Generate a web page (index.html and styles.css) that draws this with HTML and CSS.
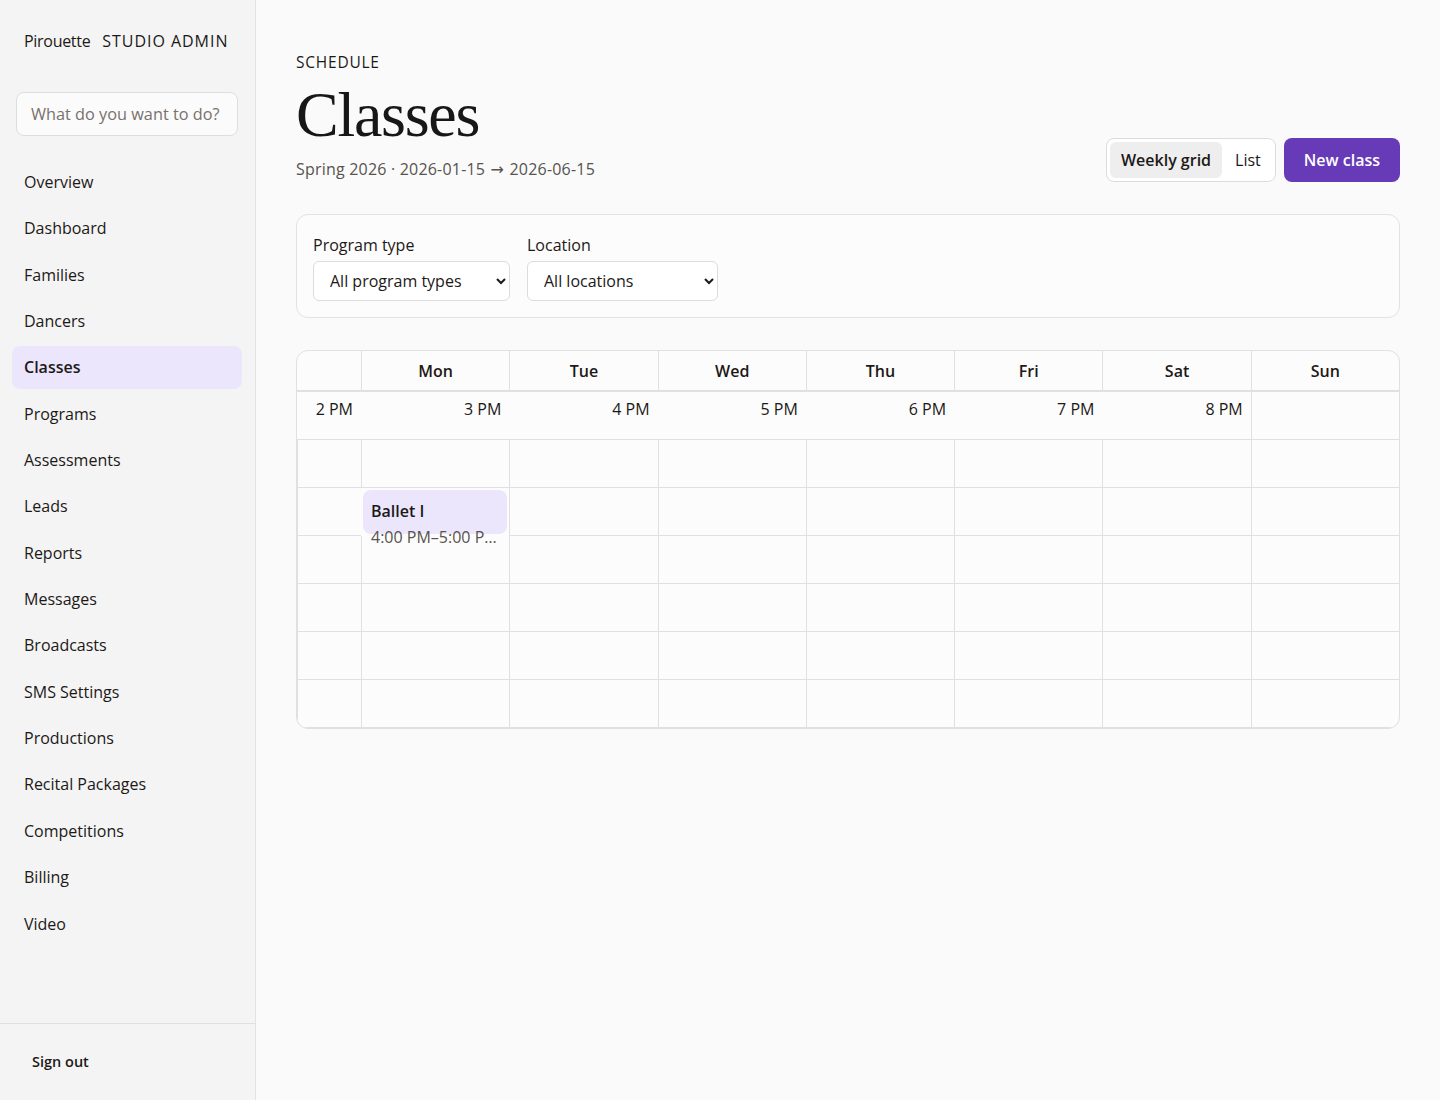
FILE: index.html
```html
<!DOCTYPE html>
<html lang="en">

<head>
  <meta charset="UTF-8" />
  <meta name="viewport" content="width=device-width, initial-scale=1.0" />
  <title>Classes · Pirouette</title>
  <link rel="stylesheet" href="styles.css">
</head>

<body>
  <div class="app">
    <aside class="sidebar">
      <div class="brand">
        <span class="brand-name">Pirouette</span>
        <span class="brand-tag">STUDIO ADMIN</span>
      </div>

      <input class="search" type="text" placeholder="What do you want to do?">

      <nav class="nav">
        <a class="nav-item" href="#">Overview</a>
        <a class="nav-item" href="#">Dashboard</a>
        <a class="nav-item" href="#">Families</a>
        <a class="nav-item" href="#">Dancers</a>
        <a class="nav-item active" href="#">Classes</a>
        <a class="nav-item" href="#">Programs</a>
        <a class="nav-item" href="#">Assessments</a>
        <a class="nav-item" href="#">Leads</a>
        <a class="nav-item" href="#">Reports</a>
        <a class="nav-item" href="#">Messages</a>
        <a class="nav-item" href="#">Broadcasts</a>
        <a class="nav-item" href="#">SMS Settings</a>
        <a class="nav-item" href="#">Productions</a>
        <a class="nav-item" href="#">Recital Packages</a>
        <a class="nav-item" href="#">Competitions</a>
        <a class="nav-item" href="#">Billing</a>
        <a class="nav-item" href="#">Video</a>
      </nav>

      <div class="sidebar-footer">
        <a class="signout" href="#">Sign out</a>
      </div>
    </aside>

    <main class="main">
      <div class="page-head">
        <div>
          <div class="eyebrow">SCHEDULE</div>
          <h1 class="page-title">Classes</h1>
          <div class="page-sub">Spring 2026 · 2026-01-15 <span class="arrow">→</span> 2026-06-15</div>
        </div>
        <div class="head-actions">
          <div class="segmented">
            <button class="seg-btn on">Weekly grid</button>
            <button class="seg-btn">List</button>
          </div>
          <button class="btn-primary">New class</button>
        </div>
      </div>

      <div class="filters">
        <label class="field">
          <span class="field-label">Program type</span>
          <select class="select select-program">
            <option>All program types</option>
          </select>
        </label>
        <label class="field">
          <span class="field-label">Location</span>
          <select class="select select-location">
            <option>All locations</option>
          </select>
        </label>
      </div>

      <div class="week">
        <div class="week-head">
          <div class="wh-cell corner"></div>
          <div class="wh-cell">Mon</div>
          <div class="wh-cell">Tue</div>
          <div class="wh-cell">Wed</div>
          <div class="wh-cell">Thu</div>
          <div class="wh-cell">Fri</div>
          <div class="wh-cell">Sat</div>
          <div class="wh-cell">Sun</div>
        </div>

        <div class="week-body">
          <!-- hour labels ended up spread over the first row -->
          <div class="hour">2 PM</div>
          <div class="hour">3 PM</div>
          <div class="hour">4 PM</div>
          <div class="hour">5 PM</div>
          <div class="hour">6 PM</div>
          <div class="hour">7 PM</div>
          <div class="hour">8 PM</div>
          <div class="hour last"></div>

          <div class="gutter"></div>
          <div class="slot"></div><div class="slot"></div><div class="slot"></div><div class="slot"></div>
          <div class="slot"></div><div class="slot"></div><div class="slot"></div>

          <div class="gutter"></div>
          <div class="slot event-slot">
            <div class="event">
              <div class="event-name">Ballet I</div>
              <div class="event-time">4:00 PM–5:00 PM</div>
            </div>
          </div>
          <div class="slot"></div><div class="slot"></div><div class="slot"></div>
          <div class="slot"></div><div class="slot"></div><div class="slot"></div>

          <div class="gutter"></div>
          <div class="slot"></div><div class="slot"></div><div class="slot"></div><div class="slot"></div>
          <div class="slot"></div><div class="slot"></div><div class="slot"></div>

          <div class="gutter"></div>
          <div class="slot"></div><div class="slot"></div><div class="slot"></div><div class="slot"></div>
          <div class="slot"></div><div class="slot"></div><div class="slot"></div>

          <div class="gutter"></div>
          <div class="slot"></div><div class="slot"></div><div class="slot"></div><div class="slot"></div>
          <div class="slot"></div><div class="slot"></div><div class="slot"></div>

          <div class="gutter"></div>
          <div class="slot"></div><div class="slot"></div><div class="slot"></div><div class="slot"></div>
          <div class="slot"></div><div class="slot"></div><div class="slot"></div>
        </div>
      </div>
    </main>
  </div>
</body>

</html>
```

FILE: styles.css
```css
* {
  box-sizing: border-box;
}

body {
  margin: 0;
  padding: 0;
  font-family: 'Open Sans', 'Noto Sans', sans-serif;
  color: #1c1917;
  background-color: #fafafa;
}

a {
  color: inherit;
  text-decoration: none;
}

button,
select,
input {
  font-family: inherit;
}

.app {
  display: flex;
  min-height: 100vh;
}

/* sidebar */

.sidebar {
  width: 256px;
  flex-shrink: 0;
  height: 100vh;
  display: flex;
  flex-direction: column;
  background-color: #f4f4f4;
  border-right: 1px solid #e2e2e2;
}

.brand {
  display: flex;
  align-items: baseline;
  gap: 12px;
  padding: 30px 24px 0;
  height: 54px;
  font-size: 16px;
}

.brand-name {
  letter-spacing: -0.3px;
}

.brand-tag {
  letter-spacing: 0.06em;
}

.search {
  margin: 38px 17px 0 16px;
  height: 44px;
  padding: 0 14px;
  font-size: 16.3px;
  color: #1c1917;
  background-color: #fbfbfb;
  border: 1px solid #dedede;
  border-radius: 8px;
}

.search::placeholder {
  color: #78716c;
}

.nav {
  flex: 1;
  display: flex;
  flex-direction: column;
  gap: 4px;
  padding: 25px 13px 0 12px;
}

.nav-item {
  display: block;
  padding: 10px 12px;
  line-height: 22.35px;
  font-size: 16px;
  border-radius: 8px;
}

.nav-item.active {
  background-color: #ece6fd;
  font-weight: 600;
}

.sidebar-footer {
  border-top: 1px solid #e0e0e0;
  padding: 26px 32px;
}

.signout {
  display: block;
  line-height: 24px;
  font-size: 14.5px;
  font-weight: 600;
}

/* main */

.main {
  flex: 1;
  min-width: 0;
  padding: 50px 40px 40px;
}

.page-head {
  display: flex;
  justify-content: space-between;
  align-items: flex-end;
  margin-bottom: 32px;
}

.eyebrow {
  font-size: 15.5px;
  line-height: 24px;
  letter-spacing: 0.05em;
}

.page-title {
  margin: 6px 0 0;
  font-family: 'Liberation Serif', serif;
  font-weight: 400;
  font-size: 64px;
  line-height: 70px;
  letter-spacing: -0.02em;
  color: #171717;
}

.page-sub {
  margin-top: 7px;
  font-size: 16px;
  line-height: 24px;
  letter-spacing: 0.2px;
  color: #57534e;
}

.arrow {
  font-family: 'DejaVu Sans', sans-serif;
  font-size: 16px;
  margin: 0 1px;
}

.head-actions {
  display: flex;
  gap: 8px;
}

.segmented {
  display: flex;
  padding: 3px;
  background-color: #fff;
  border: 1px solid #dcdcdc;
  border-radius: 8px;
}

.seg-btn {
  border: none;
  background: none;
  padding: 0 11px;
  height: 36px;
  font-size: 16px;
  color: #1c1917;
  border-radius: 6px;
  cursor: pointer;
}

.seg-btn.on {
  background-color: #eeeeee;
  font-weight: 600;
}

.seg-btn + .seg-btn {
  padding: 0 11px 0 13px;
}

.btn-primary {
  height: 44px;
  padding: 0 20px;
  border: none;
  border-radius: 8px;
  background-color: #673ab7;
  color: #fff;
  font-size: 16px;
  font-weight: 600;
  cursor: pointer;
}

/* filters */

.filters {
  display: flex;
  gap: 17px;
  padding: 16px;
  background-color: #fcfcfc;
  border: 1px solid #e2e2e2;
  border-radius: 12px;
}

.field {
  display: flex;
  flex-direction: column;
  gap: 2px;
}

.field-label {
  font-size: 16px;
  line-height: 28px;
}

.select {
  height: 40px;
  padding: 0 8px 0 12px;
  font-size: 16px;
  color: #1c1917;
  background-color: #fff;
  border: 1px solid #dcdcdc;
  border-radius: 6px;
}

.select-program {
  width: 197px;
}

.select-location {
  width: 191px;
}

/* weekly grid */

.week {
  margin-top: 32px;
  background-color: #fcfcfc;
  border: 1px solid #e0e0e0;
  border-radius: 12px;
  overflow: hidden;
}

.week-head,
.week-body {
  display: grid;
  grid-template-columns: 64px repeat(7, minmax(0, 1fr));
}

.week-head {
  border-bottom: 2px solid #e0e0e0;
}

.wh-cell {
  height: 39px;
  line-height: 40px;
  text-align: center;
  font-size: 16px;
  font-weight: 600;
  border-left: 1px solid #e0e0e0;
}

.wh-cell.corner {
  border-left: none;
}

.week-body {
  grid-auto-rows: 48px;
}

.hour {
  padding: 5px 8px 0;
  text-align: right;
  font-size: 16px;
  line-height: 24px;
  border-bottom: 1px solid #e0e0e0;
}

.hour.last {
  border-left: 1px solid #e0e0e0;
}

.gutter {
  border-left: 1px solid #e0e0e0;
  border-bottom: 1px solid #e0e0e0;
}

.slot {
  border-left: 1px solid #e0e0e0;
  border-bottom: 1px solid #e0e0e0;
}

.event-slot {
  border: none;
  min-width: 0;
}

.event {
  margin: 2px;
  height: 44px;
  padding: 9px 9px 0 8px;
  background-color: #ece6fd;
  border-radius: 8px;
}

.event-name {
  font-size: 16px;
  font-weight: 600;
  line-height: 24px;
}

.event-time {
  font-size: 16px;
  line-height: 28px;
  color: #57534e;
  white-space: nowrap;
  overflow: hidden;
  text-overflow: ellipsis;
}
```
